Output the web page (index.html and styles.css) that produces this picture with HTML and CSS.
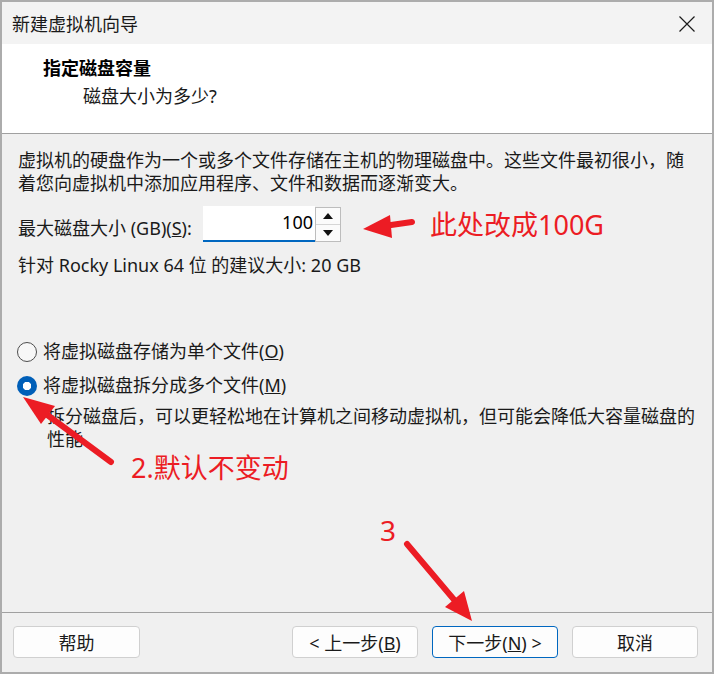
FILE: index.html
```html
<!DOCTYPE html>
<html lang="zh-CN">
<head>
  <meta charset="UTF-8" />
  <title>新建虚拟机向导</title>
  <link rel="stylesheet" href="styles.css">
</head>
<body>

  <div class="dialog">

    <!-- BARRA DE TITULO -->
    <div class="titlebar">
      <span class="title">新建虚拟机向导</span>
      <svg class="close" width="16" height="16" viewBox="0 0 16 16">
        <path d="M0.5 0.5 L15.5 15.5 M15.5 0.5 L0.5 15.5" stroke="#1b1b1b" stroke-width="1.2" fill="none"/>
      </svg>
    </div>

    <!-- CABECALHO -->
    <div class="header">
      <div class="h-title">指定磁盘容量</div>
      <div class="h-sub">磁盘大小为多少?</div>
    </div>

    <!-- CONTEUDO -->
    <div class="content">
      <p class="intro">虚拟机的硬盘作为一个或多个文件存储在主机的物理磁盘中。这些文件最初很小，随<br>着您向虚拟机中添加应用程序、文件和数据而逐渐变大。</p>

      <div class="size-row">
        <span class="size-label">最大磁盘大小 (GB)(<u>S</u>):</span>
        <div class="spin">
          <div class="spin-input">100</div>
          <div class="spin-btns">
            <span class="spin-btn"><svg width="10" height="6" viewBox="0 0 10 6"><path d="M5 0 L10 6 L0 6 Z" fill="#111"/></svg></span>
            <span class="spin-btn"><svg width="10" height="6" viewBox="0 0 10 6"><path d="M0 0 L10 0 L5 6 Z" fill="#111"/></svg></span>
          </div>
        </div>
      </div>

      <p class="hint">针对 Rocky Linux 64 位 的建议大小: 20 GB</p>

      <div class="radios">
        <div class="radio-row"><span class="radio"></span>将虚拟磁盘存储为单个文件(<u>O</u>)</div>
        <div class="radio-row"><span class="radio checked"></span>将虚拟磁盘拆分成多个文件(<u>M</u>)</div>
        <p class="desc">拆分磁盘后，可以更轻松地在计算机之间移动虚拟机，但可能会降低大容量磁盘的<br>性能</p>
      </div>
    </div>

    <!-- BOTOES -->
    <div class="footer">
      <button class="btn">帮助</button>
      <span class="spacer"></span>
      <button class="btn">&lt; 上一步(<u>B</u>)</button>
      <button class="btn primary">下一步(<u>N</u>) &gt;</button>
      <button class="btn">取消</button>
    </div>

    <!-- ANOTACOES -->
    <svg class="marks" width="714" height="674" viewBox="0 0 714 674">
      <g stroke="#ec1c24" stroke-width="6" stroke-linecap="round" fill="#ec1c24">
        <line x1="412" y1="222" x2="384" y2="226"/>
        <line x1="111" y1="462" x2="46" y2="414"/>
        <line x1="407" y1="544" x2="456" y2="602"/>
      </g>
      <g fill="#ec1c24">
        <polygon points="363,229 390,215 392,238"/>
        <polygon points="23,397 55,406 41,424"/>
        <polygon points="472,621 445,607 464,591"/>
      </g>
    </svg>
    <span class="note note-1">此处改成100G</span>
    <span class="note note-2">2.默认不变动</span>
    <span class="note note-3">3</span>

  </div>

</body>
</html>
```

FILE: styles.css
```css
body {
  margin: 0;
  font-family: 'Noto Sans', 'Noto Sans CJK SC', sans-serif;
  font-size: 18px;
  color: #1a1a1a;
}
.dialog {
  position: relative;
  width: 714px;
  height: 674px;
  box-sizing: border-box;
  border: 2px solid #acacac;
  background: #f0f0f0;
  display: flex;
  flex-direction: column;
}
.titlebar {
  height: 42px;
  background: #f3f3f3;
  display: flex;
  align-items: center;
  justify-content: space-between;
  padding: 0 17px 0 10px;
}
.title {
  font-family: 'Noto Sans CJK SC', sans-serif;
  font-size: 18px;
  line-height: 23px;
}
.close {
  margin-top: 2px;
}
.header {
  background: #fff;
  border-bottom: 1px solid #a0a0a0;
  padding-top: 12px;
  box-sizing: border-box;
  height: 90px;
}
.h-title {
  font-family: 'Noto Sans CJK SC', sans-serif;
  font-weight: bold;
  line-height: 23px;
  padding-left: 41px;
  color: #000;
}
.h-sub {
  line-height: 23px;
  padding-left: 81px;
  margin-top: 6px;
}
.content {
  flex: 1;
  padding: 15px 16px 0 16px;
  border-bottom: 1px solid #a0a0a0;
}
p {
  margin: 0;
  line-height: 23px;
}
.size-row {
  display: flex;
  align-items: center;
  height: 36px;
  margin-top: 11px;
}
.size-label {
  margin-top: 5px;
  width: 185px;
}
.spin {
  display: flex;
  height: 36px;
}
.spin-input {
  width: 110px;
  height: 34px;
  background: #fff;
  border-bottom: 2px solid #0067c0;
  text-align: right;
  line-height: 32px;
  color: #000;
  padding-right: 2px;
  box-sizing: content-box;
}
.spin-btns {
  width: 24px;
  display: flex;
  flex-direction: column;
  border: 1px solid #bdbdbd;
  margin-top: 1px;
  height: 33px;
  background: #fbfbfb;
}
.spin-btn {
  flex: 1;
  display: flex;
  align-items: center;
  justify-content: center;
}
.spin-btn + .spin-btn {
  border-top: 1px solid #d6d6d6;
}
.hint {
  margin-top: 12px;
}
.radios {
  margin-top: 63px;
}
.radio-row {
  display: flex;
  align-items: center;
  line-height: 23px;
  margin-left: -1px;
  margin-bottom: 11px;
}
.radio {
  width: 18px;
  height: 18px;
  border: 1px solid #4d4d4d;
  border-radius: 50%;
  margin-right: 6px;
  background: #f7f7f7;
}
.radio.checked {
  width: 20px;
  height: 20px;
  border: none;
  background: radial-gradient(circle, #fff 0, #fff 4px, #005fb8 4.5px);
}
.desc {
  padding-left: 29px;
  margin-top: -3px;
}
.footer {
  height: 59px;
  display: flex;
  align-items: flex-start;
  gap: 14px;
  padding: 13px 14px 0 11px;
  box-sizing: border-box;
}
.spacer {
  flex: 1;
}
.btn {
  width: 126px;
  height: 32px;
  font-family: 'Noto Sans', 'Noto Sans CJK SC', sans-serif;
  font-size: 18px;
  color: #1a1a1a;
  background: #fdfdfd;
  border: 1px solid #d0d0d0;
  border-radius: 4px;
  padding: 0;
}
.btn:first-child {
  width: 127px;
}
.btn.primary {
  border-color: #0067c0;
}
.marks {
  position: absolute;
  left: -2px;
  top: -2px;
  pointer-events: none;
}
.note {
  position: absolute;
  color: #ec1c24;
  font-family: 'Noto Sans', 'Noto Sans CJK SC', sans-serif;
  font-size: 27px;
  line-height: 30px;
}
.note-1 {
  left: 428px;
  top: 208px;
}
.note-2 {
  left: 129px;
  top: 451px;
}
.note-3 {
  left: 378px;
  top: 513px;
  font-size: 28px;
}
```
